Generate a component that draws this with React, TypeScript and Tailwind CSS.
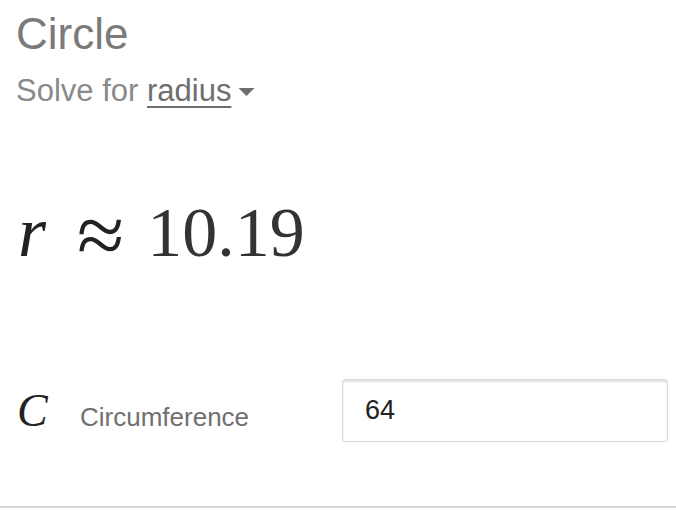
export default function App() {
  return (
    <div className="w-[676px] h-[511px] bg-white flex flex-col font-['Liberation_Sans',Arial,sans-serif]">
      <div className="px-4 pt-[8px]">
        <h1 className="text-[44px] leading-[52px] text-[#7a7a7a] font-normal">Circle</h1>
        <div className="mt-[14px] flex items-center text-[31px] leading-[34px] text-[#8a8a8a]">
          <span>Solve for&nbsp;</span>
          <span className="underline decoration-2 underline-offset-[5px] text-[#6e6e6e]">radius</span>
          <svg className="ml-[7px] mt-[2px]" width="17" height="10" viewBox="0 0 17 10">
            <path d="M0.5 1 L16.5 1 L8.5 9 Z" fill="#6e6e6e" />
          </svg>
        </div>
      </div>

      <div className="mt-[76px] px-[18px] flex items-baseline font-['Liberation_Serif',serif] text-[#333]">
        <span className="italic text-[72px] leading-none text-[#222]">r</span>
        <span className="ml-[31px] text-[86px] leading-none text-[#222] translate-y-[8px]">≈</span>
        <span className="ml-[23px] text-[70px] leading-none">10.19</span>
      </div>

      <div className="mt-[109px] flex items-center pl-[17px] pr-[8px]">
        <span className="italic text-[46px] leading-none text-[#222] font-['Liberation_Serif',serif] w-[63px]">C</span>
        <span className="text-[26px] text-[#707070] mt-[14px] w-[262px]">Circumference</span>
        <div className="flex-1 h-[63px] border border-[#d8d8d8] rounded-[3px] shadow-[inset_0_2px_2px_rgba(0,0,0,0.12)] flex items-center px-[22px]">
          <span className="text-[27px] text-[#222]">64</span>
        </div>
      </div>

      <div className="mt-auto h-[2px] bg-[#d6d6d6] mb-[3px]" />
    </div>
  );
}
